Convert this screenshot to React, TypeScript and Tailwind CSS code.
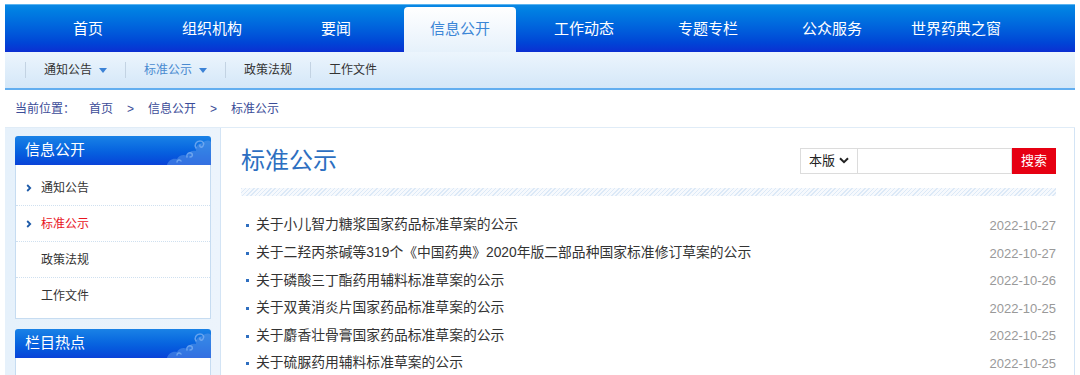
const NAV = ["首页", "组织机构", "要闻", "信息公开", "工作动态", "专题专栏", "公众服务", "世界药典之窗"];

const SUB = [
  { label: "通知公告", caret: true, active: false },
  { label: "标准公示", caret: true, active: true },
  { label: "政策法规", caret: false, active: false },
  { label: "工作文件", caret: false, active: false },
];

const SIDE = [
  { label: "通知公告", arrow: true, active: false },
  { label: "标准公示", arrow: true, active: true },
  { label: "政策法规", arrow: false, active: false },
  { label: "工作文件", arrow: false, active: false },
];

const NEWS = [
  { title: "关于小儿智力糖浆国家药品标准草案的公示", date: "2022-10-27" },
  { title: "关于二羟丙茶碱等319个《中国药典》2020年版二部品种国家标准修订草案的公示", date: "2022-10-27" },
  { title: "关于磷酸三丁酯药用辅料标准草案的公示", date: "2022-10-26" },
  { title: "关于双黄消炎片国家药品标准草案的公示", date: "2022-10-25" },
  { title: "关于麝香壮骨膏国家药品标准草案的公示", date: "2022-10-25" },
  { title: "关于硫脲药用辅料标准草案的公示", date: "2022-10-25" },
];

// auspicious cloud ornament in the corner of the sidebar headers
function Cloud() {
  return (
    <svg width="62" height="29" viewBox="0 0 62 29" className="absolute right-0 bottom-0" fill="none">
      <path
        d="M18 29c1-4 5-7 10-6 2-4 7-5 10-3 1-4 5-6 9-5-1-4 2-8 7-8 2-3 6-3 8-1v23z"
        fill="#5f9cea"
        opacity="0.5"
      />
      <path
        d="M47 12c-2-3 0-7 4-7 3 0 5 3 3 5-1 2-4 1-3-1M38 21c-1-3 2-5 4-4 2 1 2 4-1 4M28 26c0-2 3-3 4-1"
        stroke="#7fb2f2"
        strokeWidth="1.5"
        strokeLinecap="round"
        opacity="0.75"
      />
    </svg>
  );
}

function SideHeader({ title }: { title: string }) {
  return (
    <div className="relative h-[29px] rounded-t-[3px] bg-gradient-to-b from-[#1a82e6] to-[#0a42d8] overflow-hidden flex items-center pl-[10px]">
      <span className="text-[15px] text-white">{title}</span>
      <Cloud />
    </div>
  );
}

export default function App() {
  return (
    <div
      className="w-[1080px] h-[375px] overflow-hidden bg-white pt-[4px] px-[5px]"
      style={{ fontFamily: '"Liberation Sans", "Noto Sans CJK SC", sans-serif' }}
    >
      {/* Main nav */}
      <div className="h-[48px] border-t border-[#5ab4f0] bg-gradient-to-b from-[#0a88e4] to-[#0c2ed2] flex items-end pl-[27px]">
        {NAV.map((n) =>
          n === "信息公开" ? (
            <div
              key={n}
              className="w-[112px] mr-[12px] h-[45px] rounded-t-[4px] bg-gradient-to-b from-white to-[#e6f1fb] flex items-center justify-center text-[15px] text-[#3b86d6]"
            >
              {n}
            </div>
          ) : (
            <div key={n} className="w-[112px] mr-[12px] h-[45px] flex items-center justify-center text-[15px] text-white">
              {n}
            </div>
          )
        )}
      </div>

      {/* Sub nav */}
      <div className="h-[38px] bg-gradient-to-b from-[#ecf5fd] to-[#d4e7f8] border-b-2 border-[#62aef0] flex items-center pl-[20px]">
        {SUB.map((s) => (
          <div key={s.label} className="flex items-center">
            <div className="w-px h-[16px] bg-[#c3d3e3]" />
            <div className={`px-[18px] flex items-center gap-[7px] text-[12px] ${s.active ? "text-[#4a8ad0]" : "text-[#333]"}`}>
              {s.label}
              {s.caret && (
                <span className="w-0 h-0 border-l-[4px] border-r-[4px] border-t-[5px] border-l-transparent border-r-transparent border-t-[#3b82d6]" />
              )}
            </div>
          </div>
        ))}
      </div>

      {/* Breadcrumb */}
      <div className="h-[37px] flex items-center pl-[10px] text-[12px] text-[#3b4c98]">
        <span>当前位置：</span>
        <span className="ml-[14px]">首页</span>
        <span className="mx-[14px]">&gt;</span>
        <span>信息公开</span>
        <span className="mx-[14px]">&gt;</span>
        <span>标准公示</span>
      </div>

      {/* Main */}
      <div className="flex h-[300px] border-t border-[#e0ecf7]">
        <aside className="w-[215px] bg-gradient-to-r from-[#e6f1fb] to-[#ecf4fc] pt-[8px] pl-[10px] pr-[9px]">
          <SideHeader title="信息公开" />
          <div className="bg-white border border-t-0 border-[#c6dcf1] pt-[5px] pb-[4px]">
            {SIDE.map((s, i) => (
              <div
                key={s.label}
                className={`h-[36px] flex items-center pl-[10px] text-[12px] ${i < SIDE.length - 1 ? "border-b border-dotted border-[#cfe0f0]" : ""}`}
              >
                <span className="w-[15px] flex items-center">
                  {s.arrow && (
                    <svg width="6" height="8" viewBox="0 0 6 8">
                      <path d="M1.2 1l3 3-3 3" stroke="#1d5aa8" strokeWidth="1.8" fill="none" />
                    </svg>
                  )}
                </span>
                <span className={s.active ? "text-[#e8141e]" : "text-[#333]"}>{s.label}</span>
              </div>
            ))}
          </div>
          <div className="mt-[10px]">
            <SideHeader title="栏目热点" />
            <div className="h-[40px] bg-white border border-t-0 border-[#c6dcf1]" />
          </div>
        </aside>

        <main className="flex-1 bg-white border-l border-r border-[#d3e4f5] pl-[20px] pr-[18px]">
          <div className="h-[60px] flex items-center justify-between">
            <h1 className="text-[24px] text-[#2d6fc1] leading-none mt-[6px]">标准公示</h1>
            <div className="flex items-center h-[26px] mt-[5px]">
              <div className="w-[58px] h-[26px] border border-[#dcdcdc] flex items-center justify-between px-[8px] text-[13px] text-[#222]">
                本版
                <svg width="10" height="7" viewBox="0 0 10 7">
                  <path d="M1 1.2l4 4 4-4" stroke="#222" strokeWidth="2" fill="none" />
                </svg>
              </div>
              <div className="w-[154px] h-[26px] border border-l-0 border-[#dcdcdc]" />
              <div className="w-[44px] h-[26px] bg-[#e60012] text-white text-[13px] flex items-center justify-center">搜索</div>
            </div>
          </div>
          <div className="h-[8px] bg-[repeating-linear-gradient(135deg,#dce9f7_0px,#dce9f7_1px,#f6f9fd_1px,#f6f9fd_3px)]" />
          <ul className="mt-[16px]">
            {NEWS.map((n) => (
              <li key={n.title + n.date} className="h-[27.6px] flex items-center justify-between">
                <span className="flex items-center text-[#333] text-[13.8px]">
                  <span className="w-[3px] h-[3px] bg-[#2f6fc0] ml-[5px] mr-[7px]" />
                  {n.title}
                </span>
                <span className="text-[#999] text-[13px]">{n.date}</span>
              </li>
            ))}
          </ul>
        </main>
      </div>
    </div>
  );
}
